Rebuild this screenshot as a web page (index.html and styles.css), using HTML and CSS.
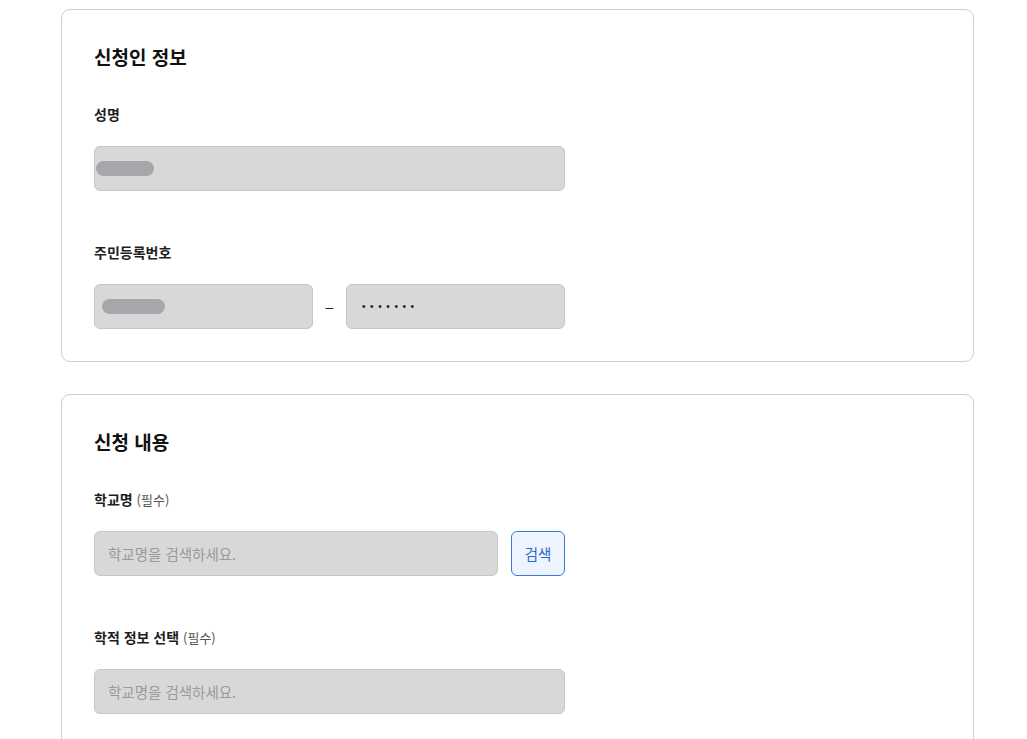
FILE: index.html
```html
<!DOCTYPE html>
<html lang="ko">
<head>
<meta charset="utf-8">
<title>신청서</title>
<link rel="stylesheet" href="styles.css">
</head>
<body>
<div class="page">
  <section class="card">
    <h2 class="card-title">신청인 정보</h2>
    <div class="field">
      <div class="label">성명</div>
      <div class="input input-wide input-name"><span class="blob blob-name"></span></div>
    </div>
    <div class="field">
      <div class="label">주민등록번호</div>
      <div class="rrn-row">
        <div class="input input-half input-rrn1"><span class="blob blob-rrn"></span></div>
        <span class="dash">–</span>
        <div class="input input-half input-rrn2"><span class="dots">•••••••</span></div>
      </div>
    </div>
  </section>

  <section class="card">
    <h2 class="card-title">신청 내용</h2>
    <div class="field">
      <div class="label">학교명 <span class="req">(필수)</span></div>
      <div class="search-row">
        <div class="input input-search"><span class="placeholder">학교명을 검색하세요.</span></div>
        <button class="btn-search">검색</button>
      </div>
    </div>
    <div class="field">
      <div class="label">학적 정보 선택 <span class="req">(필수)</span></div>
      <div class="input input-wide input-plain"><span class="placeholder">학교명을 검색하세요.</span></div>
    </div>
  </section>
</div>
</body>
</html>
```
FILE: styles.css
```css
* { box-sizing: border-box; }
html, body { margin: 0; padding: 0; background: #fff; }
body {
  font-family: "Noto Sans CJK KR", "Noto Sans", sans-serif;
  color: #1a1a1a;
}
.page {
  padding: 9px 53px 0 61px;
  display: flex;
  flex-direction: column;
  gap: 32px;
}
.card {
  width: 913px;
  border: 1px solid #cfcfcf;
  border-radius: 9px;
  padding: 32px;
  display: flex;
  flex-direction: column;
  gap: 51px;
}
.card-title {
  margin: 0 0 -19px 0;
  font-size: 19px;
  line-height: 30px;
  font-weight: 700;
  color: #111;
}
.field {
  display: flex;
  flex-direction: column;
  gap: 22px;
}
.label {
  font-size: 14px;
  line-height: 20px;
  height: 20px;
  font-weight: 700;
  color: #1e1e1e;
}
.req {
  font-weight: 400;
  font-size: 13px;
  color: #555;
}
.input {
  height: 45px;
  background: #d8d8d8;
  border: 1px solid #c6c6c6;
  border-radius: 6px;
  display: flex;
  align-items: center;
}
.input-wide { width: 471px; }
.input-half { width: 219px; }
.input-name { padding-left: 1px; }
.input-rrn1 { padding-left: 7px; }
.input-rrn2 { padding-left: 15px; }
.input-search, .input-plain { padding-left: 13px; }
.blob {
  display: block;
  height: 15px;
  border-radius: 8px;
  background: #a6a7aa;
}
.blob-name { width: 58px; }
.blob-rrn { width: 63px; }
.rrn-row {
  display: flex;
  align-items: center;
}
.dash {
  width: 33px;
  text-align: center;
  font-size: 14px;
  color: #222;
  font-family: "Liberation Sans", sans-serif;
}
.dots {
  font-family: "Liberation Sans", sans-serif;
  font-size: 10px;
  letter-spacing: 4.6px;
  color: #1a1a1a;
}
.search-row {
  display: flex;
  gap: 13px;
}
.input-search { width: 404px; }
.placeholder {
  font-size: 14.5px;
  color: #9a9a9a;
}
.btn-search {
  width: 54px;
  height: 45px;
  background: #eef4ff;
  border: 1px solid #3a78dc;
  border-radius: 6px;
  color: #2b66c4;
  font-family: "Noto Sans CJK KR", "Noto Sans", sans-serif;
  font-size: 14.5px;
  padding: 0;
}
```
